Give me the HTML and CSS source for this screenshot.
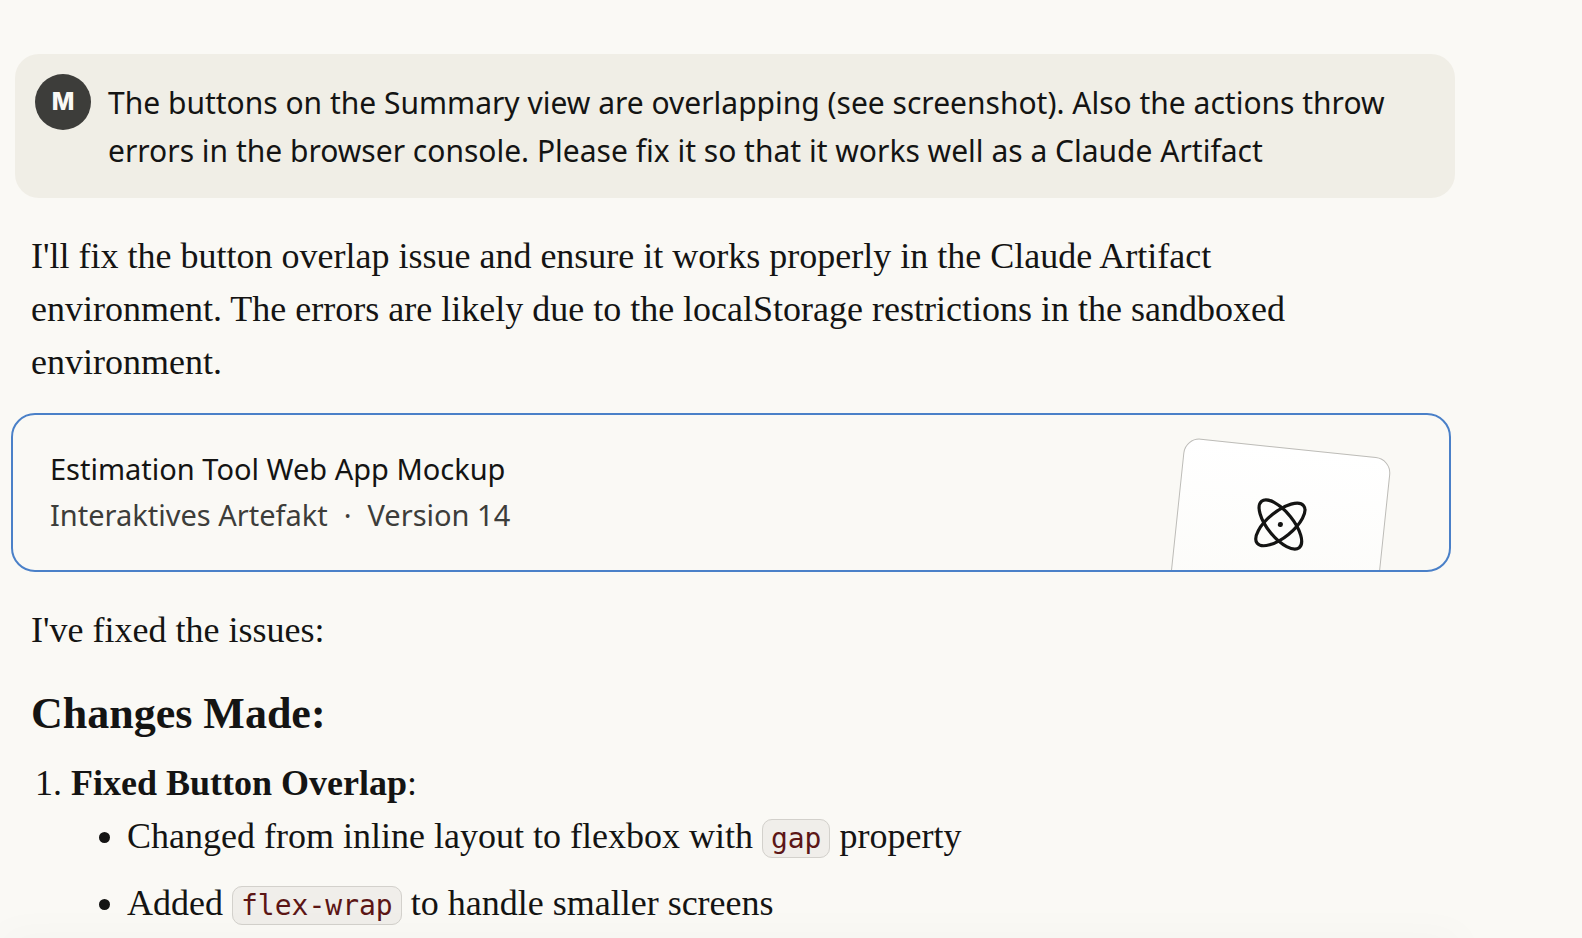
FILE: index.html
```html
<!DOCTYPE html>
<html lang="en">
<head>
<meta charset="utf-8">
<title>Conversation</title>
<link rel="stylesheet" href="styles.css">
</head>
<body>
<main class="thread">
  <section class="user-message">
    <span class="avatar">M</span>
    <p class="user-text">The buttons on the Summary view are overlapping (see screenshot). Also the actions throw errors in the browser console. Please fix it so that it works well as a Claude Artifact</p>
  </section>

  <article class="reply">
    <p class="prose">I'll fix the button overlap issue and ensure it works properly in the Claude Artifact environment. The errors are likely due to the localStorage restrictions in the sandboxed environment.</p>

    <button class="artifact" type="button">
      <span class="artifact-title">Estimation Tool Web App Mockup</span>
      <span class="artifact-meta"><span>Interaktives Artefakt</span><span>·</span><span>Version 14</span></span>
      <span class="preview">
        <svg class="atom" viewBox="0 0 60 60" fill="none" stroke="currentColor" stroke-width="3" aria-hidden="true">
          <ellipse cx="30" cy="30" rx="28" ry="12" transform="rotate(45 30 30)"/>
          <ellipse cx="30" cy="30" rx="28" ry="12" transform="rotate(-45 30 30)"/>
          <circle cx="30" cy="30" r="2.4" fill="currentColor" stroke="none"/>
        </svg>
      </span>
    </button>

    <p class="prose">I've fixed the issues:</p>
    <h2 class="heading">Changes Made:</h2>
    <ol class="changes">
      <li><strong>Fixed Button Overlap</strong>:
        <ul class="details">
          <li>Changed from inline layout to flexbox with <code>gap</code> property</li>
          <li>Added <code>flex-wrap</code> to handle smaller screens</li>
        </ul>
      </li>
    </ol>
  </article>
</main>
<div class="composer-shadow"></div>
</body>
</html>
```
FILE: styles.css
```css
* { box-sizing: border-box; }

body {
  margin: 0;
  background: #faf9f5;
  color: #141413;
  overflow: hidden;
}

.thread {
  padding: 54px 127px 0 11px;
}

.user-message {
  display: flex;
  gap: 17px;
  margin-left: 4px;
  padding: 20px 56px 23px 20px;
  border-radius: 24px;
  background: #f0eee6;
}

.avatar {
  display: flex;
  flex: none;
  align-items: center;
  justify-content: center;
  width: 56px;
  height: 56px;
  border-radius: 50%;
  background: #3d3d3a;
  color: #faf9f5;
  font: 800 24px/1 Inter, sans-serif;
}

.user-text {
  margin: 5px 0 0;
  font: 400 30px/48px "Noto Sans", sans-serif;
}

.reply {
  margin-right: 4px;
  font: 400 36px/53px "Liberation Serif", serif;
}

.prose {
  margin: 32px 64px 0 20px;
}

.artifact {
  position: relative;
  display: flex;
  flex-direction: column;
  width: 100%;
  margin: 24px 0 32px;
  padding: 31px 37px 32px;
  overflow: hidden;
  border: 2px solid #4a80c8;
  border-radius: 24px;
  background: #faf9f5;
  color: inherit;
  font: 400 29px/46px "Noto Sans", sans-serif;
  text-align: left;
}

.artifact-meta {
  display: flex;
  gap: 16px;
  color: #3d3d3a;
}

.preview {
  position: absolute;
  top: 22px;
  right: 56px;
  width: 208px;
  height: 260px;
  padding-top: 44px;
  border: 1px solid #bdbcb8;
  border-radius: 16px;
  background: linear-gradient(#ffffff, #faf9f5 240px);
  transform: rotate(6deg);
  transform-origin: 0 0;
}

.atom {
  display: block;
  width: 64px;
  height: 64px;
  margin: 0 auto;
}

.heading {
  margin: 27px 20px 0;
  font-size: 44px;
  line-height: 60px;
}

.changes {
  margin: 13px 20px 0;
  padding-left: 40px;
}

.details {
  margin: 0;
  padding-left: 56px;
  list-style-type: disc;
}

.details li + li {
  margin-top: 14px;
}

code {
  padding: 2px 8px;
  border: 1px solid #d3d1cc;
  border-radius: 10px;
  background: #f0eeea;
  color: #5c1616;
  font: 400 28px/1 "DejaVu Sans Mono", monospace;
}

.composer-shadow {
  position: fixed;
  right: 120px;
  bottom: -20px;
  left: 0;
  height: 20px;
  box-shadow: 0 0 40px rgba(0, 0, 0, 0.04);
}
```
